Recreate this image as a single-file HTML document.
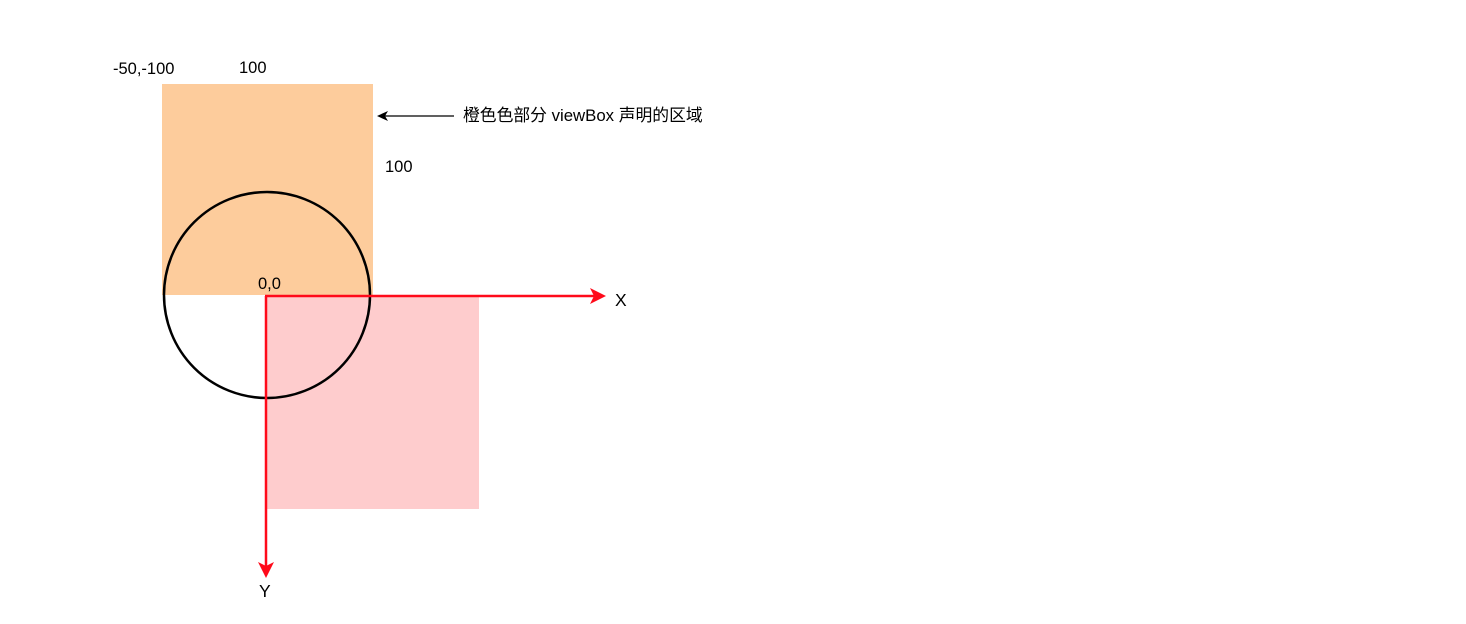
<!DOCTYPE html>
<html><head><meta charset="utf-8"><style>body{margin:0;background:#fff}</style></head><body>
<svg width="1466" height="624" xmlns="http://www.w3.org/2000/svg" style="display:block">
<rect width="1466" height="624" fill="#fff"/>
<rect x="162" y="84" width="211" height="211" fill="#fdcc9c"/>
<rect x="267" y="297" width="212" height="212" fill="#fecccd"/>
<circle cx="267" cy="295" r="103" fill="none" stroke="#000" stroke-width="2.5"/>
<line x1="265" y1="296" x2="598" y2="296" stroke="#ff0a1a" stroke-width="2.5"/>
<path d="M606 296 L590 288 L594 296 L590 304 Z" fill="#ff0a1a"/>
<line x1="266" y1="296" x2="266" y2="570" stroke="#ff0a1a" stroke-width="2.5"/>
<path d="M266 578 L258 562 L266 566 L274 562 Z" fill="#ff0a1a"/>
<line x1="454" y1="116" x2="384" y2="116" stroke="#000" stroke-width="1.3"/>
<path d="M377 116 L388 111 L385 116 L388 121 Z" fill="#000"/>
<g font-family="Liberation Sans, Noto Sans CJK SC, sans-serif" font-size="16.5" fill="#000">
<text x="113" y="74">-50,-100</text>
<text x="239" y="73">100</text>
<text x="385" y="172">100</text>
<text x="258" y="289">0,0</text>
<text x="615" y="306" font-size="17.5">X</text>
<text x="259" y="597" font-size="17.5">Y</text>
<text x="463" y="121" font-size="16.8">橙色色部分 viewBox 声明的区域</text>
</g>
</svg>
</body></html>
